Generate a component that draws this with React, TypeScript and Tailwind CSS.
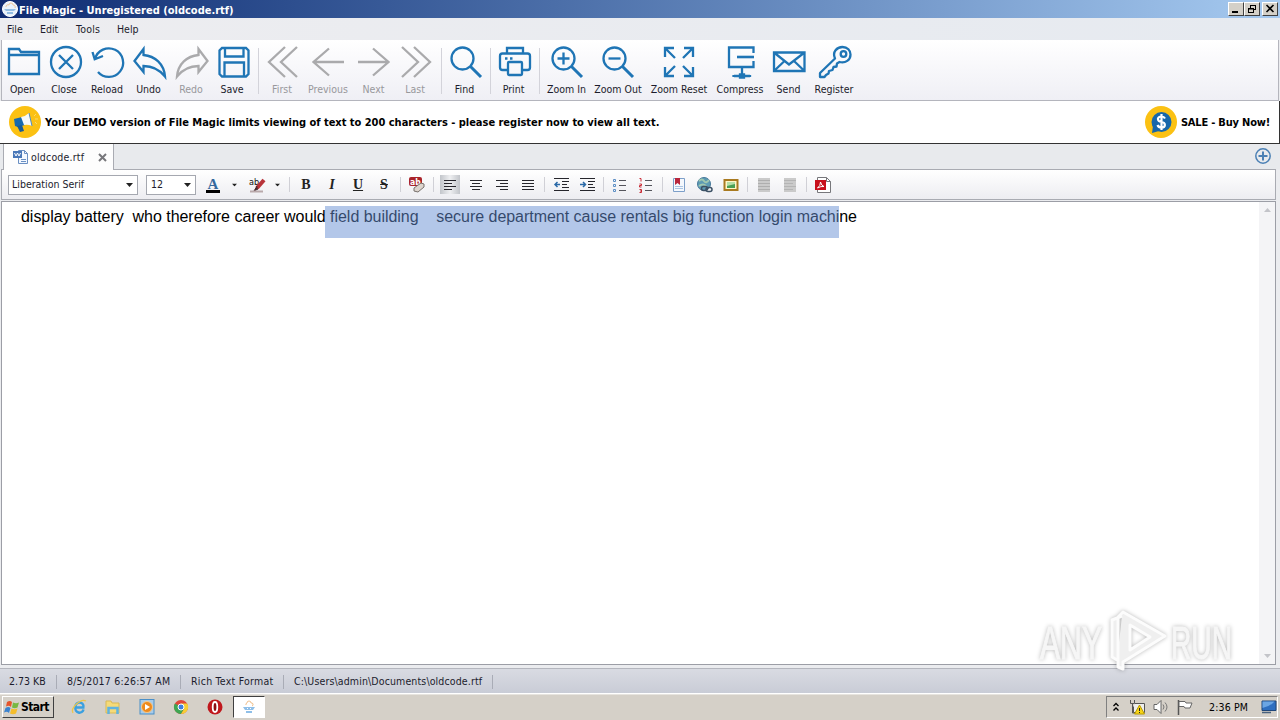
import React from 'react';
import clsx from 'clsx';

interface IconProps {
  children: React.ReactNode;
  size?: number;
  className?: string;
}

const Icon: React.FC<IconProps> = ({ children, size = 16, className }) => (
  <svg
    width={size}
    height={size}
    viewBox={`0 0 ${size} ${size}`}
    fill="none"
    stroke="currentColor"
    className={clsx('shrink-0 overflow-visible', className)}
  >
    {children}
  </svg>
);

interface Tool {
  label: string;
  width: string;
  text?: string;
  disabled?: boolean;
  icon: React.ReactNode;
}

const magnifier = (
  <>
    <circle cx="12.5" cy="12.5" r="11" />
    <path d="M20.5 20.5 31 31" strokeWidth="3" />
  </>
);

const fileTools: Tool[] = [
  { label: 'Open', width: 'w-[42px]', text: '-ml-[1px]', icon: <path d="M2 28V3h10l2 3h18v22zM2 9h30" /> },
  { label: 'Close', width: 'w-[42px]', text: '-ml-[2px]', icon: <><circle cx="17" cy="16" r="15" /><path d="m10 9 14 14M24 9 10 23" /></> },
  { label: 'Reload', width: 'w-[42px]', icon: <path d="M4 13a14.300 14.300 0 1 1 3 13M1.500 6l2.200 7.300L12 10" /> },
  { label: 'Undo', width: 'w-[42px]', text: '-ml-[1px]', icon: <path d="M1.500 15 10.500 3v6C22 10 31 18 32 30.500 26 23 19 20 10.500 20v6z" /> },
  { label: 'Redo', width: 'w-[42px]', disabled: true, icon: <path d="M32.500 15 23.500 3v6C12 10 3 18 2 30.500 8 23 15 20 23.500 20v6z" /> },
  { label: 'Save', width: 'w-[42px]', text: '-ml-[2px]', icon: <path d="M5 2h24l2.500 2.500V28L29 30.500H5L2.500 28V4.500zM8 2v8.500h18.500V2M7.500 30.500V16.500h19.500v14" /> },
];

const navTools: Tool[] = [
  { label: 'First', width: 'w-[40px]', text: '-ml-[2px]', disabled: true, icon: <path d="M18 1 2 16l16 15M30 1 14 16l16 15" /> },
  { label: 'Previous', width: 'w-[50px]', disabled: true, icon: <path d="M32 16H1M17 2.500 1.500 16 17 29.500" /> },
  { label: 'Next', width: 'w-[42px]', text: '-ml-[1px]', disabled: true, icon: <path d="M0 16h31M15 2.500 30.500 16 15 29.500" /> },
  { label: 'Last', width: 'w-[42px]', text: '-ml-[2px]', disabled: true, icon: <path d="m2 1 16 15L2 31M14 1l16 15-16 15" /> },
];

const findTools: Tool[] = [
  { label: 'Find', width: 'w-[40px]', text: '-ml-[3px]', icon: magnifier },
];

const printTools: Tool[] = [
  { label: 'Print', width: 'w-[40px]', text: '-ml-[3px]', icon: <><path d="M8 7V2h16v5M8 24H3.500q-2.500 0-2.500-2.500V10q0-2.500 2.500-2.500h25q2.500 0 2.500 2.500v11.500q0 2.500-2.500 2.500H24" /><rect x="9" y="16" width="14" height="13" rx="1" /><path d="M6 12.500h2.500M11 12.500h2.500" /></> },
];

const viewTools: Tool[] = [
  { label: 'Zoom In', width: 'w-[45px]', icon: <>{magnifier}<path d="M6.500 12.500h12M12.500 6.500v12" /></> },
  { label: 'Zoom Out', width: 'w-[58px]', icon: <>{magnifier}<path d="M6.500 12.500h12" /></> },
  { label: 'Zoom Reset', width: 'w-[64px]', icon: <path d="M2 11V2h9M2 2l10 10M21 2h9v9M30 2 20 12M2 21v9h9M2 30l10-10M30 21v9h-9M30 30 20 20" /> },
  { label: 'Compress', width: 'w-[58px]', icon: <><path d="M29.500 7V1.500H5V21h24.500v-6M18 21v8M10 30h16" /><path d="M13 11h17" strokeWidth="2.600" /><path d="M16 28.500h4v3h-4zM9.500 29v2M26 29v2" /></> },
  { label: 'Send', width: 'w-[40px]', text: '-ml-[1px]', icon: <path d="M1 6.500h30.500V25H1zM1 6.500l15 12 15.500-12M1 25l10.500-10M31.500 25 21 15" /> },
  { label: 'Register', width: 'w-[50px]', icon: <><path d="M17 12.500C14 6 19 1 24.500 1c5 0 8 3.500 8 7.500 0 5.500-5 9-11 7.500L19 17.500l-.5 3-3 .5-1 3-3.500 1-.5 2.500L8 29l-1.500 2H2v-4z" strokeLinejoin="round" /><circle cx="25.500" cy="8" r="2.800" /></> },
];

const ToolGroup: React.FC<{ tools: Tool[] }> = ({ tools }) => (
  <>
    {tools.map((tool) => (
      <button key={tool.label} className={clsx('flex h-full flex-col items-center pt-[6px]', tool.width)}>
        <Icon size={32} className={clsx('stroke-[2.3]', tool.disabled ? 'text-[#aaaaac]' : 'text-[#1f75b5]')}>
          {tool.icon}
        </Icon>
        <span
          className={clsx(
            'mt-[4px] whitespace-nowrap leading-[14px]',
            tool.text,
            tool.disabled ? 'text-[#98989c]' : 'text-[#1c1c2c]',
          )}
        >
          {tool.label}
        </span>
      </button>
    ))}
  </>
);

const ToolSep = () => <div className="mx-[4px] mt-[8px] h-[46px] w-px bg-[#d3d3da]" />;

const FormatButton: React.FC<{ children: React.ReactNode; active?: boolean }> = ({ children, active }) => (
  <button className="flex h-[20px] w-[26px] items-center justify-center">
    {active ? (
      <span className="flex h-[19px] w-[20px] items-center justify-center bg-gradient-to-r from-[#c2c5ca] via-[#eeeff1] to-[#c2c5ca]">
        {children}
      </span>
    ) : (
      children
    )}
  </button>
);

const FormatSep = () => <div className="mx-[3px] h-[15px] w-px bg-[#d0d0d6]" />;

const Arrow = () => (
  <svg width="7" height="4" viewBox="0 0 7 4" className="shrink-0 fill-[#222]">
    <path d="M0 0h7L3.500 4z" />
  </svg>
);

const Lines: React.FC<{ d: string }> = ({ d }) => (
  <Icon className="text-[#26262c]">
    <path d={d} />
  </Icon>
);

const StatusSep = () => <div className="h-[14px] w-px bg-[#a9acb6]" />;

const TitleButton: React.FC<{ children: React.ReactNode }> = ({ children }) => (
  <button className="h-[14px] w-[16px] border border-t-white border-r-[#404040] border-b-[#404040] border-l-white bg-[#d4d0c8]">
    <svg width="14" height="12" viewBox="0 0 14 12" fill="none" className="stroke-black">
      {children}
    </svg>
  </button>
);

const AppLogo = () => (
  <Icon>
    <circle cx="8" cy="8" r="7.500" fill="#e9f2fb" stroke="#fff" />
    <path d="M4 6a2 2 0 0 1 3-2 2 2 0 0 1 4 0 2 2 0 0 1 2 3" stroke="#efc79b" />
    <path d="M2 8h12l-2 2H4zM5 11h6v2H5z" fill="#93bde3" stroke="none" />
  </Icon>
);

const TitleBar = () => (
  <header className="flex h-[18px] items-center bg-gradient-to-r from-[#0f2b72] to-[#a6caf0] pr-[2px] pl-[2px]">
    <AppLogo />
    <h1 className="ml-[1px] flex-1 pt-[2px] text-[11px] leading-[15px] font-bold text-white">
      File Magic - Unregistered (oldcode.rtf)
    </h1>
    <TitleButton><path d="M3 9h6" strokeWidth="2" /></TitleButton>
    <TitleButton><path d="M5 2.500h6M5.500 2v3M10.500 2v5M8 6.500h3M3 5.500h5.500M3.500 5v5M8.500 5v5M3 9.500h6M3 6h6" /></TitleButton>
    <div className="w-[2px]" />
    <TitleButton><path d="m3.500 2 7 7M10.500 2l-7 7" strokeWidth="1.600" /></TitleButton>
  </header>
);

const Banner = () => (
  <div className="flex h-[43px] items-center border-r border-b border-[#333] bg-white pr-[9px] pl-[9px] text-[11px] font-bold text-black">
    <Icon size={32}>
      <circle cx="16" cy="16" r="16" fill="#fbc113" stroke="none" />
      <path d="m5 13 8-2 3 8-7 2-3-1z" fill="#1769ad" stroke="none" />
      <path d="m8 20 5-1 2 6-4 1z" fill="#175a96" stroke="none" />
      <path d="M12 11q5-1 8-4l3 13q-4-2-8-1z" fill="#f6f8fa" stroke="none" />
      <path d="m20 7 3 13" stroke="#4d8cc0" />
      <path d="m25 10 2-2m-1 5h3m-3 3 2 2" stroke="#f8d96e" />
    </Icon>
    <p className="ml-[4px] flex-1 pt-[2px] tracking-[-0.02px] whitespace-nowrap">
      Your DEMO version of File Magic limits viewing of text to 200 characters - please register now to view all text.
    </p>
    <Icon size={32}>
      <circle cx="16" cy="16" r="16" fill="#fbc113" stroke="none" />
      <circle cx="16.500" cy="16" r="10" fill="#1767aa" stroke="none" />
      <path d="m8 20-1 7 7-2z" fill="#1767aa" stroke="none" />
      <path d="M20 12.500q-1-2-3.500-2c-5 0-4.500 5 0 5.500s4.500 5.500 0 5.500q-3 0-4-2.500M16.500 8v16" stroke="#fff" strokeWidth="2.200" />
    </Icon>
    <span className="ml-[4px] pt-[2px] tracking-[-0.2px] whitespace-nowrap">SALE - Buy Now!</span>
  </div>
);

const FormatBar = () => (
  <div className="mr-[4px] ml-px flex h-[31px] items-center border border-[#a9abb2] bg-gradient-to-b from-white to-[#ededf1] pl-[6px]">
    <div className="flex h-[20px] w-[130px] items-center justify-between border border-[#a5a8b0] bg-white pr-[4px] pl-[3px]">
      <span>Liberation Serif</span>
      <Arrow />
    </div>
    <div className="ml-[8px] flex h-[20px] w-[50px] items-center justify-between border border-[#a5a8b0] bg-white pr-[4px] pl-[4px]">
      <span>12</span>
      <Arrow />
    </div>
    <div className="ml-[9px] flex w-[16px] flex-col items-center pt-[2px]">
      <span className="font-['Liberation_Serif'] text-[15px] leading-[12px] font-bold text-[#34689e]">A</span>
      <div className="h-[3px] w-[14px] bg-black" />
    </div>
    <div className="ml-[10px] scale-75"><Arrow /></div>
    <Icon className="ml-[11px]">
      <text x="0" y="8" fontSize="9" fill="#111" stroke="none">ab</text>
      <path d="M15 3 8 11" stroke="#b8343a" strokeWidth="4" />
      <path d="m8 9-3 5 4-2" fill="#47292e" stroke="#47292e" />
      <path d="M1 14.500h13" stroke="#b9a9ab" strokeWidth="2" />
    </Icon>
    <div className="ml-[9px] scale-75"><Arrow /></div>
    <div className="w-[5px]" />
    <FormatSep />
    <FormatButton><span className="font-['Liberation_Serif'] text-[14px] font-bold text-[#222]">B</span></FormatButton>
    <FormatButton><span className="font-['Liberation_Serif'] text-[14px] font-bold text-[#222] italic">I</span></FormatButton>
    <FormatButton><span className="font-['Liberation_Serif'] text-[14px] font-bold text-[#222] underline">U</span></FormatButton>
    <FormatButton><span className="font-['Liberation_Serif'] text-[14px] font-bold text-[#222] line-through">S</span></FormatButton>
    <FormatSep />
    <FormatButton>
      <Icon>
        <rect x="0" y="0" width="13" height="9" rx="2" fill="#a92329" stroke="none" />
        <text x="1" y="7.500" fontSize="8.500" fontWeight="bold" fill="#fff" stroke="none">ab</text>
        <path d="m5 11 7-5 3 1v3l-6 5-4-1z" fill="#ddd5ce" stroke="#77706c" />
      </Icon>
    </FormatButton>
    <FormatSep />
    <FormatButton active><Lines d="M2 3.500h12M2 6.500h8M2 9.500h12M2 12.500h8" /></FormatButton>
    <FormatButton><Lines d="M2 3.500h12M4 6.500h8M2 9.500h12M4 12.500h8" /></FormatButton>
    <FormatButton><Lines d="M2 3.500h12M6 6.500h8M2 9.500h12M6 12.500h8" /></FormatButton>
    <FormatButton><Lines d="M2 3.500h12M2 6.500h12M2 9.500h12M2 12.500h12" /></FormatButton>
    <FormatSep />
    <FormatButton>
      <Icon className="text-[#26262c]">
        <path d="M1 1.500h15M9 4.500h7M9 7.500h5M9 10.500h7M1 13.500h15" />
        <path d="M7 7.500H2m2.500-2.500L2 7.500 4.500 10" stroke="#2b6aa8" strokeWidth="1.500" />
      </Icon>
    </FormatButton>
    <FormatButton>
      <Icon className="text-[#26262c]">
        <path d="M1 1.500h15M9 4.500h7M9 7.500h5M9 10.500h7M1 13.500h15" />
        <path d="M1 7.500h5M4 5l2.500 2.500L4 10" stroke="#2b6aa8" strokeWidth="1.500" />
      </Icon>
    </FormatButton>
    <FormatSep />
    <FormatButton>
      <Icon className="text-[#55555c]">
        <path d="M7 3.500h7M7 8.500h7M7 13.500h7" />
        <path d="M1.500 2.500h2v2h-2zM1.500 7.500h2v2h-2zM1.500 12.500h2v2h-2z" stroke="#5c8fc5" />
      </Icon>
    </FormatButton>
    <FormatButton>
      <Icon className="text-[#55555c]">
        <path d="M7 3.500h7M7 8.500h7M7 13.500h7" />
        <path d="M1.500 1.500h1.500v3M1.500 7h2v1.500h-2V10h2M1.500 12.500h2v3h-2M2 14h1.500" stroke="#c92b35" />
      </Icon>
    </FormatButton>
    <FormatSep />
    <FormatButton>
      <Icon>
        <path d="M2.500 1.500h11v13h-11z" fill="#f4f8fd" stroke="#7d9fc9" />
        <path d="M4 1h5v7L6.500 6 4 8z" fill="#b8263c" stroke="none" />
        <path d="M4 9.500h8M4 11.500h8" stroke="#a9c4e2" />
      </Icon>
    </FormatButton>
    <FormatButton>
      <Icon>
        <circle cx="7" cy="7" r="6.500" fill="#5d9bb4" stroke="#47799a" />
        <path d="M2 4q3-3 5 0t5-1M2 9q4-3 7 0" stroke="#a0c8b0" strokeWidth="2" />
        <rect x="4.500" y="9.500" width="6" height="4" rx="2" stroke="#3c5165" strokeWidth="1.500" />
        <rect x="9" y="10.500" width="6" height="4" rx="2" stroke="#3c5165" strokeWidth="1.500" />
      </Icon>
    </FormatButton>
    <FormatButton>
      <Icon>
        <path d="M1.500 3h13v10h-13z" fill="#fff7c8" stroke="#a97a20" strokeWidth="2" />
        <path d="M4 5h8v6H4z" fill="#4a9f55" stroke="none" />
        <path d="M4 5h8v2L4 9z" fill="#b5dfa8" stroke="none" />
      </Icon>
    </FormatButton>
    <FormatSep />
    <FormatButton><Icon><path d="M2 1h12v14H2z" fill="#cacaca" stroke="none" /><path d="M2 3.500h12M2 6.500h12M2 9.500h12M2 12.500h12" stroke="#aeaeae" /></Icon></FormatButton>
    <FormatButton><Icon><path d="M2 1h12v14H2z" fill="#cacaca" stroke="none" /><path d="M2 3.500h12M2 6.500h9M2 9.500h12M2 12.500h9" stroke="#b4b4b4" /></Icon></FormatButton>
    <FormatSep />
    <FormatButton>
      <Icon>
        <path d="M2.500.5h9l4 4v11h-13z" fill="#fff" stroke="#77777b" />
        <path d="M11.500.5v4h4" stroke="#77777b" />
        <path d="M0 3h11v10H0z" fill="#c8101c" stroke="none" />
        <path d="M2.500 11q3-2 3-6 1 4 3.500 4.500-3-.5-6.500 1.500" stroke="#fff" />
      </Icon>
    </FormatButton>
  </div>
);

const Watermark = () => (
  <svg
    width="210"
    height="74"
    viewBox="0 0 210 74"
    className="absolute top-[401px] left-[1028px] overflow-visible drop-shadow-[0_0_2px_rgba(0,0,0,0.28)]"
  >
    <g className="fill-[#f6f6f6] stroke-[#f6f6f6] font-['Liberation_Sans']" fontSize="46">
      <text x="10" y="56" textLength="62" lengthAdjust="spacingAndGlyphs">ANY</text>
      <text x="141" y="56" textLength="61" lengthAdjust="spacingAndGlyphs">RUN</text>
    </g>
    <path
      d="M92 13l-10 4v37l5 3M93 9l42 24-42 26v7l-5-2V14zM100 22l20 12-20 13z"
      fill="#efefef"
      fillRule="evenodd"
      stroke="#fcfcfc"
      strokeWidth="3"
      strokeLinejoin="round"
    />
  </svg>
);

const TaskBar = () => (
  <footer className="flex h-[27px] items-center border-t border-white bg-[#d5d0c8] pr-[2px] pl-[2px] shadow-[inset_0_1px_0_#e7e4df]">
    <button className="flex h-[22px] w-[52px] items-center border border-t-white border-r-[#404040] border-b-[#404040] border-l-white pl-[1px] text-[12px] font-bold text-black">
      <Icon>
        <path d="M3 3q3-2 5 0L7 8Q5 6 2 7.500z" fill="#e6552b" stroke="none" />
        <path d="M9 3.500q3 1.500 6 0L13.500 8.500q-3 1.500-5.500 0z" fill="#78b843" stroke="none" />
        <path d="M1.500 9q3-2 5 0L5 14Q3 12 0 13.500z" fill="#3b83cf" stroke="none" />
        <path d="M7.500 9.500q3 1.500 6 0L12 14.500q-3 1.500-6 0z" fill="#f5bd2b" stroke="none" />
      </Icon>
      <span className="ml-[1px] tracking-[-0.6px]">Start</span>
    </button>
    <div className="ml-[17px] flex items-center gap-[18px]">
      <Icon>
        <path d="M13.500 8.500h-9a4 4 0 0 0 8 2M4.500 7.500a4 4 0 0 1 8 0" stroke="#3ba0e0" strokeWidth="2.500" />
        <path d="M2 14C-1 9 10-1 15 2" stroke="#ecc54a" strokeWidth="1.300" />
      </Icon>
      <Icon>
        <path d="M1 2h5l1 2h7v10H1z" fill="#f5da78" stroke="#d9b954" />
        <path d="M3.500 15V9h9v6" stroke="#5fb3e0" strokeWidth="2.500" />
      </Icon>
      <Icon>
        <rect x="1" y=".5" width="14" height="14.500" fill="#a9cbe8" stroke="#4a8fc8" />
        <circle cx="8" cy="8" r="5.500" fill="#ee8a1d" stroke="#f7c98a" />
        <path d="m6 5 5 3-5 3z" fill="#fff" stroke="none" />
      </Icon>
      <Icon>
        <circle cx="8" cy="8" r="7" fill="#e0463a" stroke="none" />
        <path d="M8 8 1.900 4.500A7 7 0 0 0 8 15l3-5z" fill="#3fa653" stroke="none" />
        <path d="M8 4.500h6.200A7 7 0 0 1 8 15l3-5z" fill="#f7ce35" stroke="none" />
        <circle cx="8" cy="8" r="3" fill="#3f7fe0" stroke="#fff" />
      </Icon>
      <Icon>
        <circle cx="8" cy="8" r="7.500" fill="#c0171c" stroke="none" />
        <ellipse cx="8" cy="8" rx="2.300" ry="5" fill="#8d0d12" stroke="#fff" strokeWidth="1.800" />
      </Icon>
    </div>
    <button className="ml-[10px] flex h-[22px] w-[32px] items-center justify-center border border-t-[#404040] border-r-white border-b-white border-l-[#404040] bg-white">
      <Icon>
        <path d="M5 6a1.500 1.500 0 0 1 1-2 1.500 1.500 0 0 1 4 0 1.500 1.500 0 0 1 1 3" stroke="#f0c08c" />
        <path d="M2 8h12l-2 3H4zM5 12h6v2H5z" fill="#8fbfe8" stroke="none" />
        <path d="M6 9.500h1M9 9.500h1" stroke="#fff" />
      </Icon>
    </button>
    <div className="flex-1" />
    <div className="flex h-[22px] w-[172px] items-center border border-t-[#808080] border-r-white border-b-white border-l-[#808080] pl-[4px] text-black">
      <Icon size={10}><path d="m2.500 4 2.500-2.500L7.500 4M2.500 8.500 5 6l2.500 2.500" strokeWidth="1.300" /></Icon>
      <Icon className="ml-[8px]">
        <path d="M6 4.500h9.500v9H4.500v-6" fill="#eee" stroke="#555" />
        <path d="M1.500 1v3.500h4V1M3.500 5v9h2" stroke="#555" />
        <path d="m10.500 6 5 9h-10z" fill="#f7d417" stroke="#b89a00" />
        <path d="M10.500 9v3m0 1v1" stroke="#222" />
      </Icon>
      <Icon className="ml-[8px]">
        <path d="M1 5.500h3l4-4v13l-4-4H1z" fill="#fff" stroke="#666" />
        <path d="M10 5.500q2 2.500 0 5M12 3.500q4 4.500 0 9" stroke="#777" />
      </Icon>
      <Icon className="ml-[8px]">
        <path d="M1.500 1v15" stroke="#555" strokeWidth="1.500" />
        <path d="M2 2.500h6l1 1.500h6l-2 5H8l-1-1.500H2z" fill="#fff" stroke="#666" />
      </Icon>
      <span className="ml-[16px] flex-1 pt-px tracking-[0.15px] whitespace-nowrap">2:36 PM</span>
      <Icon>
        <path d="M1 2h14v9.500H1z" fill="#2e6fc0" stroke="#1f4679" />
        <path d="M1.500 9q7-1 12-6.500h-12z" fill="#6ba6e4" stroke="none" />
        <path d="M1 13.500h9" stroke="#48617d" strokeWidth="1.500" />
      </Icon>
    </div>
  </footer>
);

export default function App() {
  return (
    <div className="relative flex h-[720px] w-[1280px] flex-col overflow-hidden bg-[#ebecef] font-['DejaVu_Sans_Condensed','DejaVu_Sans',sans-serif] text-[10.5px] text-[#1c1c2c]">
      <TitleBar />
      <nav className="flex h-[22px] items-center bg-gradient-to-r from-[#ededf0] to-[#e6eaf0] pt-[2px] pl-[7px]">
        <span className="w-[33px]">File</span>
        <span className="w-[36px]">Edit</span>
        <span className="w-[41px] tracking-[0.2px]">Tools</span>
        <span>Help</span>
      </nav>
      <div className="mr-px ml-px flex h-[61px] items-start border-r border-b border-l border-[#b4b5bd] bg-gradient-to-b from-white to-[#efeff5]">
        <ToolGroup tools={fileTools} />
        <ToolSep />
        <ToolGroup tools={navTools} />
        <ToolSep />
        <ToolGroup tools={findTools} />
        <ToolSep />
        <ToolGroup tools={printTools} />
        <ToolSep />
        <ToolGroup tools={viewTools} />
      </div>
      <Banner />
      <div className="flex h-[25px] items-start bg-[#e8eaed]">
        <div className="z-10 ml-[3px] flex h-[26px] w-[111px] items-center border-r border-l border-[#a9abb2] bg-[#fdfdfd] pr-[6px] pl-[9px]">
          <Icon>
            <path d="M5.500 1.500h6l3 3v10h-9z" fill="#f3f8ff" stroke="#6a8fc2" />
            <path d="M11.500 1.500v3h3M8 12.500h5M8 10.500h5" stroke="#6a8fc2" />
            <path d="M0 2h9v7H0z" fill="#4a78b8" stroke="none" />
            <path d="m1.500 4 1.500 3 1.500-3L6 7l1.500-3" stroke="#fff" />
          </Icon>
          <span className="ml-[2px] flex-1 pt-px tracking-[0.2px]">oldcode.rtf</span>
          <Icon size={9} className="stroke-2 text-[#77777b]"><path d="m1 1 7 7M8 1 1 8" /></Icon>
        </div>
        <Icon size={16} className="mt-[4px] mr-[9px] ml-auto text-[#4b80b4]">
          <circle cx="8" cy="8" r="7.200" strokeWidth="1.500" />
          <path d="M3.500 8h9M8 3.500v9" strokeWidth="2" />
        </Icon>
      </div>
      <FormatBar />
      <main className="relative mt-px mr-[4px] ml-px flex h-[464px] border border-[#9c9ea6] bg-white">
        <p className="flex-1 pt-[5px] pl-[19px] font-['Liberation_Sans'] text-[16px] leading-[19px] tracking-[-0.03px] whitespace-pre text-black">
          {'display battery  who therefore career would field building    secure department cause rentals big function login machine'}
        </p>
        <div className="absolute top-[4px] left-[323px] h-[32px] w-[514px] bg-[#6890d4]/50" />
        <div className="flex w-[16px] flex-col items-center justify-between bg-[#f4f4f6] py-[6px]">
          <svg width="7" height="4" viewBox="0 0 7 4" className="fill-[#c3c4c9]"><path d="M0 4h7L3.500 0z" /></svg>
          <svg width="7" height="4" viewBox="0 0 7 4" className="fill-[#c3c4c9]"><path d="M0 0h7L3.500 4z" /></svg>
        </div>
        <Watermark />
      </main>
      <div className="mt-auto flex h-[25px] items-center border-t border-[#b4b6be] bg-gradient-to-b from-[#d9dbe2] to-[#c9ccd6] pt-px pl-[9px] whitespace-nowrap">
        <span className="w-[47px]">2.73 KB</span>
        <StatusSep />
        <span className="w-[123px] pl-[10px] tracking-[0.2px]">8/5/2017 6:26:57 AM</span>
        <StatusSep />
        <span className="w-[102px] pl-[10px] tracking-[0.25px]">Rich Text Format</span>
        <StatusSep />
        <span className="w-[208px] pl-[10px] tracking-[0.13px]">C:\Users\admin\Documents\oldcode.rtf</span>
        <StatusSep />
      </div>
      <TaskBar />
    </div>
  );
}
